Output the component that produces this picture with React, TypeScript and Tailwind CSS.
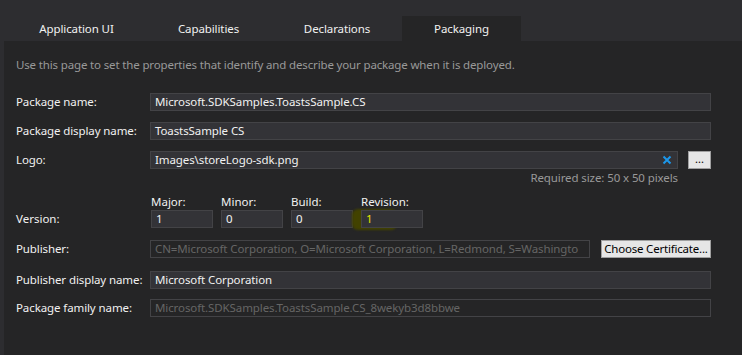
const font = { fontFamily: "'Segoe UI', 'Noto Sans', 'Open Sans', sans-serif" };

function Field({ value, disabled, className = '' }: { value: string; disabled?: boolean; className?: string }) {
  return (
    <div
      className={`h-[18px] border flex items-center px-[4px] overflow-hidden whitespace-nowrap text-[11.5px] tracking-[-0.1px] ${
        disabled ? 'bg-[#252526] border-[#434346] text-[#656565]' : 'bg-[#333337] border-[#434346] text-[#f1f1f1]'
      } ${className}`}
    >
      {value}
    </div>
  );
}

function Row({ label, children, className = '' }: { label: string; children: React.ReactNode; className?: string }) {
  return (
    <div className={`flex items-center ${className}`}>
      <div className="w-[134px] shrink-0 whitespace-nowrap text-[11.5px] tracking-[-0.1px] text-[#f1f1f1]">{label}</div>
      <div className="flex-1 min-w-0">{children}</div>
    </div>
  );
}

function VersionBox({ label, value, highlight }: { label: string; value: string; highlight?: boolean }) {
  return (
    <div className="flex flex-col w-[62px]">
      <div className="text-[11.5px] text-[#f1f1f1] leading-[14px] mb-[1px]">{label}</div>
      <div className="relative">
        {highlight && (
          <div className="absolute left-[-9px] top-[-1px] w-[45px] h-[21px] rounded-[6px] bg-[#424200] blur-[1px]" />
        )}
        <div className="relative h-[18px] border border-[#434346] bg-[#333337] flex items-center px-[4px] text-[11.5px]">
          <span className={highlight ? 'text-[#e6e600]' : 'text-[#f1f1f1]'}>{value}</span>
        </div>
      </div>
    </div>
  );
}

const tabs = [
  { name: 'Application UI', w: 'w-[137px]' },
  { name: 'Capabilities', w: 'w-[127px]' },
  { name: 'Declarations', w: 'w-[130px]' },
  { name: 'Packaging', w: 'w-[119px]' },
];

export default function App() {
  return (
    <div className="w-[742px] h-[355px] bg-[#2d2d30] flex flex-col overflow-hidden" style={font}>
      {/* tab strip */}
      <div className="h-[41px] flex items-end pl-[8px] shrink-0">
        {tabs.map((t, i) => (
          <div
            key={t.name}
            className={`h-[25px] flex items-center justify-center text-[11.5px] tracking-[-0.1px] text-[#f1f1f1] ${t.w} ${
              i === 3 ? 'bg-[#252526]' : ''
            }`}
          >
            {t.name}
          </div>
        ))}
      </div>

      {/* page */}
      <div className="flex-1 ml-[4px] bg-[#252526] pl-[12px] pr-[31px]">
        <div className="text-[11.5px] tracking-[-0.15px] text-[#999999] mt-[16px] leading-[16px]">
          Use this page to set the properties that identify and describe your package when it is deployed.
        </div>

        <Row label="Package name:" className="mt-[20px]">
          <Field value="Microsoft.SDKSamples.ToastsSample.CS" />
        </Row>
        <Row label="Package display name:" className="mt-[11px]">
          <Field value="ToastsSample CS" />
        </Row>
        <Row label="Logo:" className="mt-[11px]">
          <div className="flex items-center gap-[10px]">
            <div className="flex-1 h-[18px] border border-[#434346] bg-[#333337] flex items-center px-[4px] text-[11.5px] tracking-[-0.1px] text-[#f1f1f1]">
              <span className="flex-1">Images\storeLogo-sdk.png</span>
              <svg width="10" height="10" viewBox="0 0 10 10" className="mr-[1px]">
                <path d="M1.5 1.5 L8.5 8.5 M8.5 1.5 L1.5 8.5" stroke="#1c97ea" strokeWidth="2" />
              </svg>
            </div>
            <div className="w-[23px] h-[18px] bg-[#e6e6e6] border border-[#a0a0a0] flex items-center justify-center text-[11px] text-black leading-none pb-[3px]">
              ...
            </div>
          </div>
        </Row>
        <div className="flex pr-[33px] justify-end text-[11.5px] tracking-[-0.1px] text-[#999999] leading-[16px] mt-[1px]">
          Required size: 50 x 50 pixels
        </div>

        <div className="flex items-end mt-[9px]">
          <div className="w-[135px] shrink-0 text-[11.5px] text-[#f1f1f1] h-[18px] flex items-center">Version:</div>
          <div className="flex gap-[8px]">
            <VersionBox label="Major:" value="1" />
            <VersionBox label="Minor:" value="0" />
            <VersionBox label="Build:" value="0" />
            <VersionBox label="Revision:" value="1" highlight />
          </div>
        </div>

        <Row label="Publisher:" className="mt-[12px]">
          <div className="flex items-center gap-[11px]">
            <Field
              disabled
              className="flex-1"
              value="CN=Microsoft Corporation, O=Microsoft Corporation, L=Redmond, S=Washingto"
            />
            <div className="w-[110px] shrink-0 h-[18px] bg-[#e6e6e6] border border-[#a0a0a0] flex items-center justify-center whitespace-nowrap text-[11.5px] tracking-[-0.2px] text-black">
              Choose Certificate...
            </div>
          </div>
        </Row>
        <Row label="Publisher display name:" className="mt-[13px]">
          <Field value="Microsoft Corporation" />
        </Row>
        <Row label="Package family name:" className="mt-[10px]">
          <Field disabled value="Microsoft.SDKSamples.ToastsSample.CS_8wekyb3d8bbwe" />
        </Row>
      </div>
    </div>
  );
}
